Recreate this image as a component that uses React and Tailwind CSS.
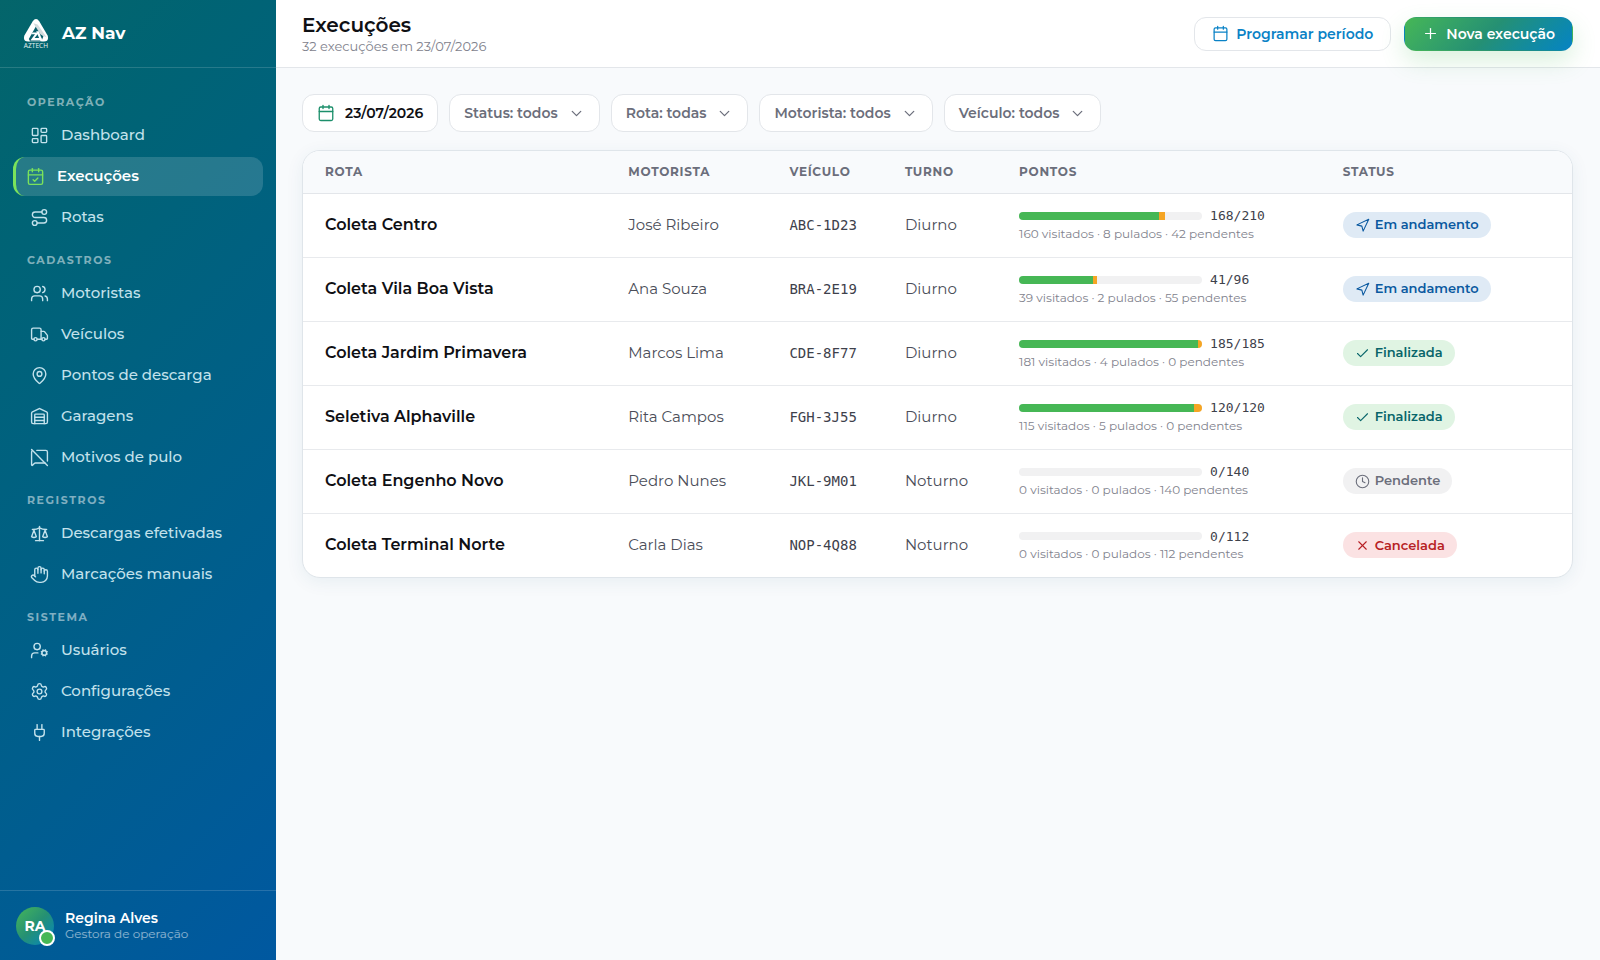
import {
  Calendar, CalendarCheck, Check, ChevronDown, Clock, Hand, LayoutDashboard,
  MapPin, MessageSquareOff, Navigation, Plug, Plus, Route, Scale, Settings,
  Truck, UserCog, Users, Warehouse, X
} from 'lucide-react'

const NAV = [
  {
    title: 'Operação',
    items: [
      { label: 'Dashboard', icon: LayoutDashboard },
      { label: 'Execuções', icon: CalendarCheck, active: true },
      { label: 'Rotas', icon: Route },
    ],
  },
  {
    title: 'Cadastros',
    items: [
      { label: 'Motoristas', icon: Users },
      { label: 'Veículos', icon: Truck },
      { label: 'Pontos de descarga', icon: MapPin },
      { label: 'Garagens', icon: Warehouse },
      { label: 'Motivos de pulo', icon: MessageSquareOff },
    ],
  },
  {
    title: 'Registros',
    items: [
      { label: 'Descargas efetivadas', icon: Scale },
      { label: 'Marcações manuais', icon: Hand },
    ],
  },
  {
    title: 'Sistema',
    items: [
      { label: 'Usuários', icon: UserCog },
      { label: 'Configurações', icon: Settings },
      { label: 'Integrações', icon: Plug },
    ],
  },
]

const FILTERS = ['Status: todos', 'Rota: todas', 'Motorista: todos', 'Veículo: todos']

const STATUS = {
  andamento: { label: 'Em andamento', icon: Navigation, className: 'bg-[#dfeaf5] text-[#0a59a0]' },
  finalizada: { label: 'Finalizada', icon: Check, className: 'bg-[#e0f4e3] text-[#08656a]' },
  pendente: { label: 'Pendente', icon: Clock, className: 'bg-[#f1f1f2] text-[#6b6e7b]' },
  cancelada: { label: 'Cancelada', icon: X, className: 'bg-[#fbe2e3] text-[#b71f24]' },
}

const ROWS = [
  { rota: 'Coleta Centro', motorista: 'José Ribeiro', placa: 'ABC-1D23', turno: 'Diurno', visitados: 160, pulados: 8, total: 210, status: 'andamento' },
  { rota: 'Coleta Vila Boa Vista', motorista: 'Ana Souza', placa: 'BRA-2E19', turno: 'Diurno', visitados: 39, pulados: 2, total: 96, status: 'andamento' },
  { rota: 'Coleta Jardim Primavera', motorista: 'Marcos Lima', placa: 'CDE-8F77', turno: 'Diurno', visitados: 181, pulados: 4, total: 185, status: 'finalizada' },
  { rota: 'Seletiva Alphaville', motorista: 'Rita Campos', placa: 'FGH-3J55', turno: 'Diurno', visitados: 115, pulados: 5, total: 120, status: 'finalizada' },
  { rota: 'Coleta Engenho Novo', motorista: 'Pedro Nunes', placa: 'JKL-9M01', turno: 'Noturno', visitados: 0, pulados: 0, total: 140, status: 'pendente' },
  { rota: 'Coleta Terminal Norte', motorista: 'Carla Dias', placa: 'NOP-4Q88', turno: 'Noturno', visitados: 0, pulados: 0, total: 112, status: 'cancelada' },
]

function Logo() {
  return (
    <svg viewBox="0 0 28 32" className="w-7 h-8 flex-shrink-0" aria-hidden="true">
      <path d="M10.6 3.4Q14-1.4 17.4 3.4L25.6 17.4Q27.4 23.4 21.8 23.6H6.2Q.6 23.4 2.4 17.4Z" fill="#fff" />
      <path d="M14 8.2 21.4 18.6 19.2 23.6H8.2L6.8 21Z" fill="#0a606c" />
      <path d="M11.4 5.2 15.6 6.6 24.8 19.4 18.6 16.4Z" fill="#d3dcde" />
      <path d="M10.6 14.4H17L12.6 20H19.6L18.4 22.4H8.4L13 16.2H9.6Z" fill="#fff" />
      <path d="M14.2 13.2H16.8L20.6 23H18.4Z" fill="#fff" />
      <text x="14" y="29.6" textAnchor="middle" fontFamily="Open Sans, sans-serif" fontSize="6.6" fontWeight="500" fill="#e8f2f3">AZTECH</text>
    </svg>
  )
}

function NavItem({ item }) {
  const Icon = item.icon
  return (
    <a
      href="#"
      aria-current={item.active ? 'page' : undefined}
      className={`h-[39px] flex items-center gap-3 rounded-xl text-[15px] ${
        item.active
          ? 'bg-white/15 border-l-3 border-[#7be35b] pl-[10px] font-semibold text-white'
          : 'pl-[17px] font-medium text-[#c3e2ec]'
      }`}
    >
      <Icon size={19} strokeWidth={1.75} className={item.active ? 'text-[#7be35b]' : ''} />
      {item.label}
    </a>
  )
}

function Sidebar() {
  return (
    <aside className="w-[276px] flex-shrink-0 flex flex-col bg-linear-135 from-[#04656a] to-[#0058a0]">
      <div className="h-[68px] flex items-center gap-3 px-[22px] border-b border-white/15">
        <Logo />
        <span className="text-[17px] font-bold text-white">AZ Nav</span>
      </div>

      <nav className="flex-1 px-[13px] pt-[25px]">
        {NAV.map(section => (
          <div key={section.title} className="mb-[14px]">
            <h2 className="h-[23px] pl-[14px] text-[11px] leading-[18px] font-bold uppercase tracking-[0.14em] text-white/50">
              {section.title}
            </h2>
            <div className="flex flex-col gap-0.5">
              {section.items.map(item => (
                <NavItem key={item.label} item={item} />
              ))}
            </div>
          </div>
        ))}
      </nav>

      <div className="h-[70px] flex items-center gap-[11px] px-4 border-t border-white/15">
        <div className="relative w-[38px] h-[38px] rounded-full bg-linear-135 from-[#46b755] via-[#259073] to-[#0883c4] flex items-center justify-center text-sm font-bold text-white">
          RA
          <span className="absolute -right-px -bottom-px w-4 h-4 rounded-full bg-[#46b755] border-2 border-white" />
        </div>
        <div>
          <p className="text-sm leading-4 font-semibold text-white">Regina Alves</p>
          <p className="text-xs leading-4 text-white/55">Gestora de operação</p>
        </div>
      </div>
    </aside>
  )
}

function Points({ row }) {
  const feitos = row.visitados + row.pulados
  return (
    <div>
      <div className="flex items-center gap-2 h-4">
        <div className="w-[183px] h-2 rounded-full bg-[#f1f1f2] overflow-hidden flex">
          <div className="bg-[#46b755]" style={{ width: `${(row.visitados / row.total) * 100}%` }} />
          <div className="bg-[#f5a524]" style={{ width: `${(row.pulados / row.total) * 100}%` }} />
        </div>
        <span className="font-['DejaVu_Sans_Mono',monospace] text-[13px] text-[#3e414b]">
          {feitos}/{row.total}
        </span>
      </div>
      <p className="mt-0.5 text-xs leading-4 text-[#7f828d]">
        {row.visitados} visitados · {row.pulados} pulados · {row.total - feitos} pendentes
      </p>
    </div>
  )
}

function StatusBadge({ status }) {
  const { label, icon: Icon, className } = STATUS[status]
  return (
    <span className={`inline-flex items-center gap-[5px] h-[26px] px-3 rounded-full text-[13px] font-semibold align-middle ${className}`}>
      <Icon size={15} strokeWidth={1.75} />
      {label}
    </span>
  )
}

export default function App() {
  return (
    <div className="min-h-screen flex bg-[#f8fafc] font-[Montserrat,Inter,sans-serif] text-[#0f1014]">
      <Sidebar />

      <div className="flex-1 min-w-0">
        {/* Header */}
        <header className="h-[68px] flex items-center justify-between pl-[26px] pr-[27px] bg-white border-b border-[#e3e6ea]">
          <div>
            <h1 className="text-xl leading-6 font-semibold">Execuções</h1>
            <p className="text-[13px] leading-[18px] text-[#7f828d]">32 execuções em 23/07/2026</p>
          </div>
          <div className="flex items-center gap-[13px]">
            <button className="h-[34px] flex items-center gap-[7px] px-[17px] rounded-xl border border-[#e3e6ea] bg-white text-sm font-semibold text-[#0a82c6]">
              <Calendar size={17} strokeWidth={1.75} />
              Programar período
            </button>
            <button className="h-[34px] flex items-center gap-[7px] px-[17px] rounded-xl border border-transparent bg-linear-135 from-[#46b755] via-[#259073] to-[#0883c4] text-sm font-semibold text-white shadow-[0_10px_24px_rgba(70,183,85,0.2)]">
              <Plus size={17} strokeWidth={1.75} />
              Nova execução
            </button>
          </div>
        </header>

        <main className="pl-[26px] pr-[27px] pt-[26px]">
          {/* Filters */}
          <div className="flex gap-[11px] mb-[18px]">
            <button className="h-[38px] flex items-center gap-[10px] px-[14px] rounded-xl border border-[#e3e6ea] bg-white text-sm font-semibold">
              <Calendar size={18} strokeWidth={1.75} className="text-[#1c8f6b]" />
              23/07/2026
            </button>
            {FILTERS.map(label => (
              <button
                key={label}
                className="h-[38px] flex items-center gap-[10px] px-[14px] rounded-xl border border-[#e3e6ea] bg-white text-sm font-semibold text-[#6b6e7b]"
              >
                {label}
                <ChevronDown size={17} strokeWidth={1.75} />
              </button>
            ))}
          </div>

          {/* Executions */}
          <div className="rounded-[18px] border border-[#dfe5ea] bg-white overflow-hidden shadow-[0_4px_18px_rgba(8,80,120,0.07)]">
            <table className="w-full table-fixed text-left">
              <colgroup>
                <col className="w-[25%]" />
                <col className="w-[12.7%]" />
                <col className="w-[9.1%]" />
                <col className="w-[9%]" />
                <col className="w-[25.5%]" />
                <col />
              </colgroup>
              <thead className="bg-[#f8fafc] text-xs uppercase tracking-[0.06em] text-[#6b6e7b]">
                <tr className="h-[42px] border-b border-[#e3e6ea]">
                  <th className="pl-[22px] font-bold">Rota</th>
                  <th className="pl-2 font-bold">Motorista</th>
                  <th className="pl-2 font-bold">Veículo</th>
                  <th className="pl-2 font-bold">Turno</th>
                  <th className="pl-2 font-bold">Pontos</th>
                  <th className="pl-2 font-bold">Status</th>
                </tr>
              </thead>
              <tbody>
                {ROWS.map(row => (
                  <tr key={row.rota} className="border-b border-[#e8eaed] last:border-b-0 text-[15px] text-[#4b4e59]">
                    <td className="h-16 pl-[22px] text-base font-semibold text-[#0f1014]">{row.rota}</td>
                    <td className="pl-2">{row.motorista}</td>
                    <td className="pl-2 font-['DejaVu_Sans_Mono',monospace] text-sm text-[#3e414b]">{row.placa}</td>
                    <td className="pl-2">{row.turno}</td>
                    <td className="pl-2"><Points row={row} /></td>
                    <td className="pl-2"><StatusBadge status={row.status} /></td>
                  </tr>
                ))}
              </tbody>
            </table>
          </div>
        </main>
      </div>
    </div>
  )
}
